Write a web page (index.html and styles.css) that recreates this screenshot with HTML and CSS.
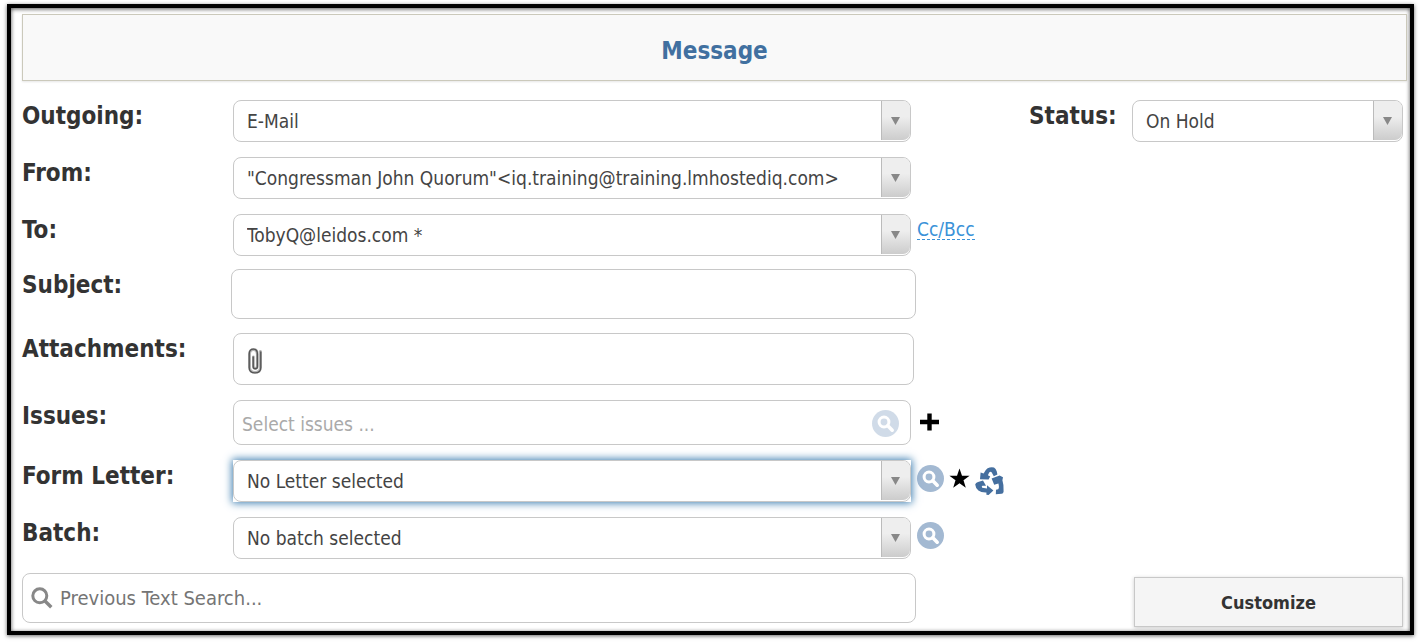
FILE: index.html
```html
<!DOCTYPE html>
<html lang="en">
<head>
  <meta charset="UTF-8">
  <meta name="viewport" content="width=device-width, initial-scale=1">
  <title>Message</title>
  <link rel="stylesheet" href="styles.css">
</head>
<body>
  <svg class="sprite" aria-hidden="true">
    <symbol id="lookup" viewBox="0 0 27 27">
      <circle cx="13.5" cy="13.5" r="13.5" fill="#a3b9d2"/>
      <circle cx="12" cy="12" r="4.9" fill="none" stroke="#fff" stroke-width="3"/>
      <path d="M15.8 15.8l4.4 4.4" stroke="#fff" stroke-width="3.6" stroke-linecap="round"/>
    </symbol>
  </svg>

  <form class="frame">
    <h1 class="title">Message</h1>

    <div class="columns">
      <div class="main">
        <div class="row">
          <label for="outgoing">Outgoing:</label>
          <div class="select"><select id="outgoing"><option>E-Mail</option></select></div>
        </div>

        <div class="row">
          <label for="from">From:</label>
          <div class="select"><select id="from"><option>"Congressman John Quorum"&lt;iq.training@training.lmhostediq.com&gt;</option></select></div>
        </div>

        <div class="row row-to">
          <label for="to">To:</label>
          <div class="select"><select id="to"><option>TobyQ@leidos.com *</option></select></div>
          <div class="extras"><a href="#cc">Cc/Bcc</a></div>
        </div>

        <div class="row row-subject">
          <label for="subject">Subject:</label>
          <input class="box subject" type="text" id="subject">
        </div>

        <div class="row">
          <label for="attach">Attachments:</label>
          <div class="box attachments">
            <button type="button" class="icon-btn" id="attach">
              <svg width="14" height="26" viewBox="0 0 14 26" fill="none" stroke-linecap="round">
                <path d="M12.4 3.5V19.5C12.4 22.8 10.4 24.3 7 24.3S1.6 22.8 1.6 19.5V6C1.6 2.9 3 1.5 5.4 1.5S9.3 2.9 9.3 6V18C9.3 19.6 8.6 20.4 7.3 20.4S5.4 19.6 5.4 18V9" stroke="#b4b4b4" stroke-width="2.8"/>
                <path d="M12.8 4V19.5C12.8 23 10.4 24.9 7 24.9S1.2 23 1.2 19.5V6C1.2 2.6 3 1.1 5.4 1.1S9.4 2.8 9.4 6V18.5C9.4 20 8.6 20.8 7.3 20.8S5.2 20 5.2 18.5V9" stroke="#555" stroke-width="1.4"/>
              </svg>
            </button>
          </div>
        </div>

        <div class="row">
          <label for="issues">Issues:</label>
          <div class="box issues">
            <input type="text" id="issues" placeholder="Select issues ...">
            <button type="button" class="icon-btn faded" aria-label="Find issues"><svg width="27" height="27"><use href="#lookup"/></svg></button>
          </div>
          <div class="extras">
            <button type="button" class="icon-btn" aria-label="Add issue">
              <svg width="24" height="34" viewBox="0 0 24 34"><path d="M3 17h19M12.5 8.5v17" stroke="#000" stroke-width="4.4"/></svg>
            </button>
          </div>
        </div>

        <div class="row">
          <label for="letter">Form Letter:</label>
          <div class="select active"><select id="letter"><option>No Letter selected</option></select></div>
          <div class="extras">
            <button type="button" class="icon-btn" aria-label="Find letter"><svg width="27" height="27"><use href="#lookup"/></svg></button>
            <button type="button" class="icon-btn" aria-label="Favorites">
              <svg width="21" height="27" viewBox="0 0 21 27"><path d="M10.5 3.5l2.5 7.2h7.6l-6.1 4.6 2.3 7.4-6.3-4.5-6.3 4.5 2.3-7.4L.4 10.7H8z" fill="#000"/></svg>
            </button>
            <button type="button" class="icon-btn" aria-label="Reset letter">
              <svg width="29" height="30" viewBox="0 -2 29 30" fill="#456f9f">
                <path d="M5.6 5.6L8.6 6.6Q10.4 2.6 12.6 1.2Q16 -.2 19 .6Q20.8 1.6 21.8 4.6L22.4 7.4 18.8 9.2 16.6 5.2Q15.4 4 14.2 5.6L12.9 8.2 15.2 9.4 13.6 12.4 5 12.2z"/>
                <path d="M16.6 11.4L24.6 8.6 28 10.2 27.4 13.2Q29 18 28.6 24.4Q28.4 26.6 26.6 26.8L20.8 27.2 21 22.8 23.2 22.2Q24.6 20.8 23.4 16.6L19.2 17.8z"/>
                <path d="M.2 17.4Q.6 15.6 3 15L8 13.6 11 18.8 7.4 18.8Q6.2 19.4 7.2 20.8L12 21.4V18.2L18.4 23.4 13.6 28 11.4 27.8V25.6Q6 25.8 3.4 23.6Q.6 21.2 .2 17.4z"/>
              </svg>
            </button>
          </div>
        </div>

        <div class="row row-batch">
          <label for="batch">Batch:</label>
          <div class="select"><select id="batch"><option>No batch selected</option></select></div>
          <div class="extras">
            <button type="button" class="icon-btn" aria-label="Find batch"><svg width="27" height="27"><use href="#lookup"/></svg></button>
          </div>
        </div>

        <div class="box search">
          <svg width="22" height="22" viewBox="0 0 22 22" fill="none" stroke="#888">
            <circle cx="8.8" cy="8.8" r="7" stroke-width="3"/>
            <path d="M14 14l6.3 6.3" stroke-width="3.4"/>
          </svg>
          <input type="search" id="search" placeholder="Previous Text Search..." aria-label="Previous Text Search">
        </div>
      </div>

      <div class="side">
        <div class="status">
          <label for="status">Status:</label>
          <div class="select"><select id="status"><option>On Hold</option></select></div>
        </div>
        <button type="button" class="customize">Customize</button>
      </div>
    </div>
  </form>
</body>
</html>
```
FILE: styles.css
```css
:root {
  --text: #333;
  --field-text: #444;
  --line: #c8c8c8;
  --blue: #4170a0;
}

* {
  box-sizing: border-box;
}

body {
  margin: 0;
  background: #fff;
  color: var(--text);
  font-family: "DejaVu Sans Condensed", "DejaVu Sans", sans-serif;
  font-size: 19px;
}

.sprite {
  display: none;
}

.frame {
  margin: 4px 7px 7px;
  padding: 6px 3px 4px 11px;
  border: 4px solid #000;
  box-shadow: 0 1px 4px rgba(0, 0, 0, 0.6), inset 0 1px 4px rgba(0, 0, 0, 0.7);
}

.title {
  margin: 0 0 19px;
  padding: 22px 0 15px;
  background: #f9f9f9;
  border: 1px solid #cbc9bb;
  color: var(--blue);
  font-size: 24px;
  line-height: 28px;
  text-align: center;
  box-shadow: 0 1px 2px rgba(0, 0, 0, 0.1);
}

.columns {
  display: grid;
  grid-template-columns: 1fr 378px;
}

.main {
  padding-bottom: 4px;
}

.row {
  display: grid;
  grid-template-columns: 211px 1fr 118px;
  margin-bottom: 15px;
}

.row-to {
  margin-bottom: 13px;
}

.row-subject,
.row-batch {
  margin-bottom: 14px;
}

label {
  padding-top: 2px;
  font-size: 24px;
  font-weight: bold;
  line-height: 28px;
}

input,
select,
button {
  font-family: inherit;
  font-size: inherit;
  color: inherit;
}

.select {
  position: relative;
  height: 42px;
}

select {
  appearance: none;
  width: 100%;
  height: 100%;
  padding: 0 40px 0 13px;
  background: #fff;
  border: 1px solid var(--line);
  border-radius: 8px;
  color: var(--field-text);
}

/* drop-down handle */
.select::before {
  content: "";
  position: absolute;
  top: 1px;
  right: 1px;
  bottom: 2px;
  width: 28px;
  border-left: 1px solid #bbb;
  border-radius: 0 7px 7px 0;
  background: linear-gradient(#eee 40%, #ccc);
  pointer-events: none;
}

.select::after {
  content: "";
  position: absolute;
  top: 17px;
  right: 11px;
  width: 9px;
  height: 8px;
  background: #888;
  clip-path: polygon(0 0, 100% 0, 50% 100%);
  pointer-events: none;
}

.active {
  box-shadow: 0 0 8px 1px #3a7cb0;
}

.box {
  background: #fff;
  border: 1px solid var(--line);
  border-radius: 8px;
}

.box input {
  flex: 1;
  min-width: 0;
  padding: 0;
  border: none;
  outline: none;
  background: none;
}

.box input::placeholder {
  color: #757575;
}

.subject {
  height: 50px;
  margin: 0 -5px 0 -2px;
  padding: 0 12px;
}

.attachments {
  display: flex;
  align-items: center;
  height: 52px;
  margin-right: -3px;
  padding: 4px 14px 0;
}

.issues {
  display: flex;
  align-items: center;
  height: 45px;
  padding: 2px 11px 0 8px;
}

.issues input::placeholder {
  color: #aaa;
}

.icon-btn {
  padding: 0;
  border: none;
  background: none;
  cursor: pointer;
}

.icon-btn svg {
  display: block;
}

.faded {
  opacity: 0.5;
}

.extras {
  display: flex;
  align-items: flex-start;
  gap: 5px;
  padding: 5px 0 0 6px;
  height: 0;
}

.extras a {
  color: #3a92d8;
  line-height: 20px;
  text-decoration: none;
  border-bottom: 1px dashed #3a92d8;
}

.search {
  display: flex;
  align-items: center;
  gap: 7px;
  height: 50px;
  margin-right: 113px;
  padding: 0 8px;
  font-size: 20px;
}

.side {
  display: flex;
  flex-direction: column;
  justify-content: space-between;
  padding-right: 4px;
}

.status {
  display: grid;
  grid-template-columns: 103px 1fr;
}

.customize {
  height: 50px;
  margin-left: 105px;
  background: #f5f5f5;
  border: 1px solid #c8c8c8;
  font-size: 18px;
  font-weight: bold;
  box-shadow: 0 1px 4px rgba(0, 0, 0, 0.2);
  cursor: pointer;
}
```
